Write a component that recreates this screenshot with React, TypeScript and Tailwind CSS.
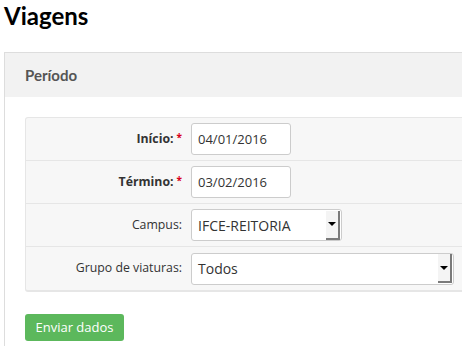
import React from "react";

const Select = ({ value, width }: { value: string; width: string }) => (
  <div
    className={`${width} h-[32px] flex items-center justify-between bg-white border border-[#ccc] rounded-[3px] pl-[6px] pr-[1px]`}
  >
    <span className="text-[14px] text-[#333]">{value}</span>
    <div className="w-[14px] h-[29px] bg-[#f4f4f4] border-r-2 border-b-2 border-[#7a7a7a] flex items-center justify-center">
      <div className="w-0 h-0 border-l-[4px] border-r-[4px] border-t-[4px] border-l-transparent border-r-transparent border-t-black" />
    </div>
  </div>
);

const Row = ({ label, required, bold, children, last }: any) => (
  <div
    className={`flex items-center h-[43px] ${last ? "" : "border-b border-[#e6e6e6]"}`}
  >
    <div className="w-[165px] pr-[9px] text-right text-[12.3px] text-[#333]">
      <span className={bold ? "font-bold" : ""}>{label}</span>
      {required && <span className="text-[#d9001b] font-bold text-[10px] align-top ml-[3px]">*</span>}
    </div>
    {children}
  </div>
);

export default function App() {
  return (
    <div className="w-[462px] h-[346px] overflow-hidden bg-white font-['Open_Sans',sans-serif]">
      <h1 className="px-[4px] pt-[1px] h-[52px] font-['Lato',sans-serif] font-bold text-[24px] leading-[30px] text-black">
        Viagens
      </h1>
      <div className="ml-[4px] w-[520px] border border-[#ddd]">
        <div className="h-[44px] bg-[#f2f2f2] px-[20px] flex items-center">
          <h2 className="font-['Lato',sans-serif] font-bold text-[15px] text-[#555]">Período</h2>
        </div>
        <div className="px-[20px] pt-[20px] pb-[10px]">
          <div className="bg-[#f7f7f7] border border-[#e6e6e6] border-b-2 rounded-[3px]">
            <Row label="Início:" required bold>
              <input
                readOnly
                value="04/01/2016"
                className="w-[100px] h-[32px] bg-white border border-[#ccc] rounded-[3px] px-[6px] text-[13px] text-[#333] outline-none"
              />
            </Row>
            <Row label="Término:" required bold>
              <input
                readOnly
                value="03/02/2016"
                className="w-[100px] h-[32px] bg-white border border-[#ccc] rounded-[3px] px-[6px] text-[13px] text-[#333] outline-none"
              />
            </Row>
            <Row label="Campus:">
              <Select value="IFCE-REITORIA" width="w-[151px]" />
            </Row>
            <Row label="Grupo de viaturas:" last>
              <Select value="Todos" width="w-[263px]" />
            </Row>
          </div>
          <button
            type="button"
            className="mt-[22px] w-[99px] h-[27px] bg-[#5cb85c] rounded-[3px] text-white text-[13px] flex items-center justify-center"
          >
            Enviar dados
          </button>
        </div>
      </div>
    </div>
  );
}
